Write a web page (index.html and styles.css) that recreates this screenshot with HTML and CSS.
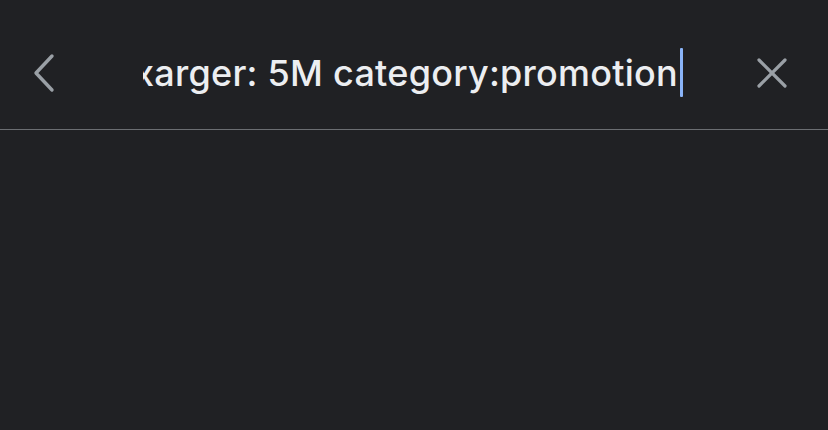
FILE: index.html
```html
<!DOCTYPE html>
<html>
<head>
<meta charset="utf-8">
<link rel="stylesheet" href="styles.css">
</head>
<body>
<header class="bar">
  <button class="icon back" aria-label="Back">
    <svg width="26" height="40" viewBox="0 0 26 40"><path d="M21 3 L5 20 L21 37" fill="none" stroke="#9aa0a6" stroke-width="3.4" stroke-linecap="round" stroke-linejoin="round"/></svg>
  </button>
  <div class="field">
    <div class="text">size:xarger: 5M category:promotion<span class="caret"></span></div>
  </div>
  <button class="icon close" aria-label="Clear">
    <svg width="32" height="32" viewBox="0 0 32 32"><path d="M3 3 L29 29 M29 3 L3 29" fill="none" stroke="#9aa0a6" stroke-width="3.2" stroke-linecap="round"/></svg>
  </button>
</header>
<main class="content"></main>
</body>
</html>
```
FILE: styles.css
```css
html, body {
  margin: 0;
  padding: 0;
  background: #202124;
  height: 100%;
}
body {
  font-family: Inter, Roboto, "Noto Sans", sans-serif;
}
.bar {
  height: 130px;
  box-sizing: border-box;
  border-bottom: 1px solid #6b6e72;
  display: flex;
  align-items: center;
  padding: 16px 40px 0 31px;
}
.icon {
  background: none;
  border: 0;
  padding: 0;
  display: flex;
  align-items: center;
  justify-content: center;
}
.back {
  margin-top: 1px;
}
.close {
  margin-top: 1px;
}
.field {
  flex: 1;
  margin: 0 73px 0 86px;
  overflow: hidden;
  display: flex;
  justify-content: flex-end;
}
.text {
  white-space: nowrap;
  color: #eceef1;
  font-size: 36px;
  font-weight: 500;
  letter-spacing: 0.25px;
  display: flex;
  align-items: center;
}
.caret {
  display: inline-block;
  width: 3px;
  height: 49px;
  background: #8ab4f8;
  margin-left: 2px;
  border-radius: 1px;
}
```
